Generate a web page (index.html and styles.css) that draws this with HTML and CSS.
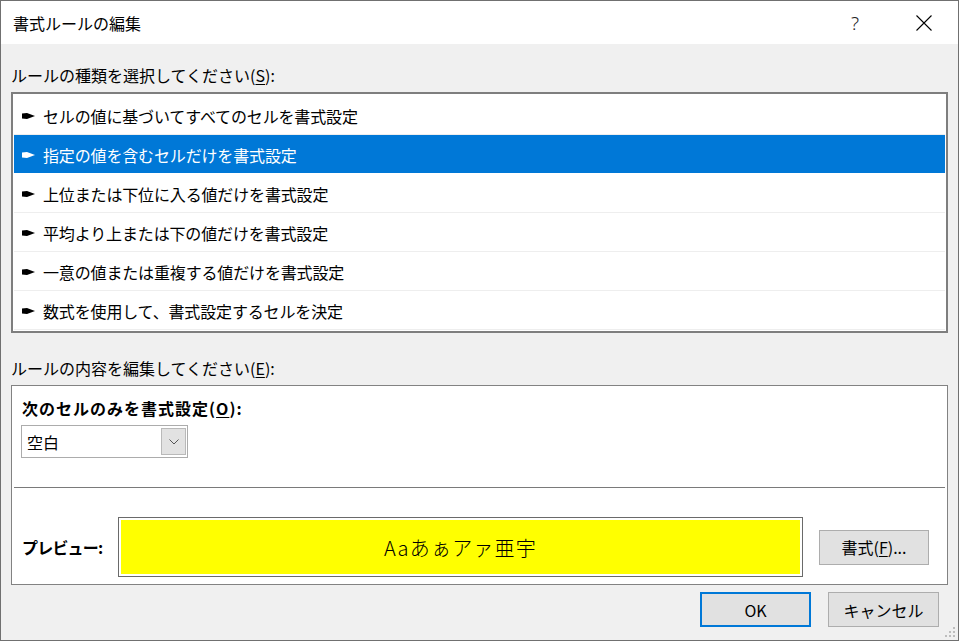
FILE: index.html
```html
<!DOCTYPE html>
<html lang="ja">
<head>
<meta charset="utf-8">
<title>書式ルールの編集</title>
<link rel="stylesheet" href="styles.css">
</head>
<body>
<div class="window">
  <header class="titlebar">
    <span class="title">書式ルールの編集</span>
    <span class="caption-btn help">?</span>
    <span class="caption-btn close">
      <svg width="16" height="16" viewBox="0 0 16 16"><path d="M0.5 0.5L15.5 15.5M15.5 0.5L0.5 15.5" stroke="#000" stroke-width="1.1" fill="none"/></svg>
    </span>
  </header>

  <main class="content">
    <div class="label label-types">ルールの種類を選択してください(<u>S</u>):</div>
    <ul class="rule-list">
      <li class="rule"><svg class="pointer" width="13" height="8" viewBox="0 0 13 8"><polygon points="0,1.5 5,1 13,4 5,7 0,6.5"/></svg>セルの値に基づいてすべてのセルを書式設定</li>
      <li class="rule selected"><svg class="pointer" width="13" height="8" viewBox="0 0 13 8"><polygon points="0,1.5 5,1 13,4 5,7 0,6.5"/></svg>指定の値を含むセルだけを書式設定</li>
      <li class="rule"><svg class="pointer" width="13" height="8" viewBox="0 0 13 8"><polygon points="0,1.5 5,1 13,4 5,7 0,6.5"/></svg>上位または下位に入る値だけを書式設定</li>
      <li class="rule"><svg class="pointer" width="13" height="8" viewBox="0 0 13 8"><polygon points="0,1.5 5,1 13,4 5,7 0,6.5"/></svg>平均より上または下の値だけを書式設定</li>
      <li class="rule"><svg class="pointer" width="13" height="8" viewBox="0 0 13 8"><polygon points="0,1.5 5,1 13,4 5,7 0,6.5"/></svg>一意の値または重複する値だけを書式設定</li>
      <li class="rule"><svg class="pointer" width="13" height="8" viewBox="0 0 13 8"><polygon points="0,1.5 5,1 13,4 5,7 0,6.5"/></svg>数式を使用して、書式設定するセルを決定</li>
    </ul>

    <div class="label label-edit">ルールの内容を編集してください(<u>E</u>):</div>
    <section class="editor">
      <div class="editor-label">次のセルのみを書式設定(<u>O</u>):</div>
      <div class="select">
        <span class="select-value">空白</span>
        <span class="select-btn">
          <svg width="10" height="6" viewBox="0 0 10 6"><path d="M0.5 0.5L5 5L9.5 0.5" stroke="#555" stroke-width="1" fill="none"/></svg>
        </span>
      </div>
      <hr class="divider">
      <div class="preview-row">
        <span class="preview-label">プレビュー:</span>
        <div class="preview"><div class="preview-fill">Aaあぁアァ亜宇</div></div>
        <button class="btn format-btn">書式(<u>F</u>)...</button>
      </div>
    </section>

    <div class="actions">
      <button class="btn default">OK</button>
      <button class="btn">キャンセル</button>
    </div>
  </main>

  <svg class="grip" width="11" height="11" viewBox="0 0 11 11">
    <g fill="#bdbdbd">
      <rect x="8" y="0" width="2" height="2"/>
      <rect x="4" y="4" width="2" height="2"/>
      <rect x="8" y="4" width="2" height="2"/>
      <rect x="0" y="8" width="2" height="2"/>
      <rect x="4" y="8" width="2" height="2"/>
      <rect x="8" y="8" width="2" height="2"/>
    </g>
  </svg>
</div>
</body>
</html>
```

FILE: styles.css
```css
* {
  box-sizing: border-box;
}

html, body {
  margin: 0;
  padding: 0;
}

body {
  width: 959px;
  height: 641px;
  background: #f0f0f0;
  font-family: "Noto Sans CJK JP", "Noto Sans", sans-serif;
  font-size: 16px;
  color: #000;
  overflow: hidden;
}

u {
  text-decoration: underline;
  text-underline-offset: 2px;
}

/* dialog frame */
.window {
  position: relative;
  width: 959px;
  height: 641px;
  border: 1px solid #707070;
  display: flex;
  flex-direction: column;
  background: #f0f0f0;
}

/* caption */
.titlebar {
  height: 43px;
  background: #fff;
  display: flex;
  align-items: center;
  flex-shrink: 0;
}

.title {
  flex: 1;
  padding-left: 12px;
  font-size: 16px;
  line-height: 20px;
}

.caption-btn {
  width: 46px;
  height: 43px;
  display: flex;
  align-items: center;
  justify-content: center;
}

.help {
  font-family: "Noto Sans", sans-serif;
  font-weight: 300;
  font-size: 19px;
  color: #222;
  margin-right: 23px;
}

.close {
  margin-right: 11px;
}

/* body of the dialog */
.content {
  padding: 0 10px;
  display: flex;
  flex-direction: column;
}

.label {
  line-height: 20px;
  font-size: 16px;
}

.label-types {
  margin-top: 21px;
}

.label-edit {
  margin-top: 25px;
}

/* rule type list */
.rule-list {
  list-style: none;
  margin: 7px 0 0;
  padding: 2px 1px 1px;
  background: #fff;
  border: 2px solid #7e7e7e;
}

.rule {
  height: 39px;
  border-bottom: 1px solid #eeeeee;
  display: flex;
  align-items: center;
  padding: 2px 0 0 8px;
  line-height: 20px;
  white-space: nowrap;
  letter-spacing: -0.15px;
}

.rule .pointer {
  fill: #000;
  margin-right: 8px;
  flex-shrink: 0;
}

.rule.selected {
  background: #0078d7;
  color: #fff;
  border-bottom-color: #fff;
}

.rule.selected .pointer {
  fill: #fff;
}

/* rule description box */
.editor {
  margin-top: 7px;
  background: #fff;
  border: 1px solid #828282;
  padding-top: 12px;
  display: flex;
  flex-direction: column;
}

.editor-label {
  margin-left: 10px;
  font-weight: bold;
  line-height: 20px;
  letter-spacing: 1px;
}

.select {
  margin: 7px 0 0 9px;
  width: 167px;
  height: 33px;
  border: 1px solid #acacac;
  background: #fff;
  display: flex;
  align-items: center;
  padding: 2px 1px 2px 0;
}

.select-value {
  flex: 1;
  padding-left: 5px;
  line-height: 20px;
}

.select-btn {
  width: 25px;
  height: 100%;
  background: #e2e2e2;
  border: 1px solid #b9b9b9;
  display: flex;
  align-items: center;
  justify-content: center;
}

.divider {
  margin: 29px 2px 0;
  border: 0;
  border-top: 1px solid #7a7a7a;
  height: 0;
}

.preview-row {
  display: flex;
  align-items: center;
  padding: 29px 18px 7px 10px;
}

.preview-label {
  width: 96px;
  font-weight: bold;
  line-height: 20px;
  letter-spacing: -0.8px;
}

.preview {
  flex: 1;
  height: 60px;
  border: 1px solid #6a6a6a;
  padding: 2px;
  background: #fff;
}

.preview-fill {
  height: 100%;
  background: #ffff00;
  display: flex;
  align-items: center;
  justify-content: center;
  font-size: 20px;
  font-weight: 300;
  letter-spacing: 1.2px;
  line-height: 24px;
  padding-top: 2px;
}

/* push buttons */
.btn {
  font-family: inherit;
  font-size: 16px;
  color: #000;
  background: #e1e1e1;
  border: 1px solid #adadad;
  width: 111px;
  height: 35px;
  padding: 0;
  line-height: 20px;
}

.format-btn {
  margin-left: 16px;
  width: 110px;
}

.btn.default {
  border: 2px solid #0078d7;
}

.actions {
  margin: 7px 9px 0 0;
  display: flex;
  justify-content: flex-end;
  gap: 17px;
}

/* size grip in the corner */
.grip {
  position: absolute;
  right: 2px;
  bottom: 2px;
}
```
